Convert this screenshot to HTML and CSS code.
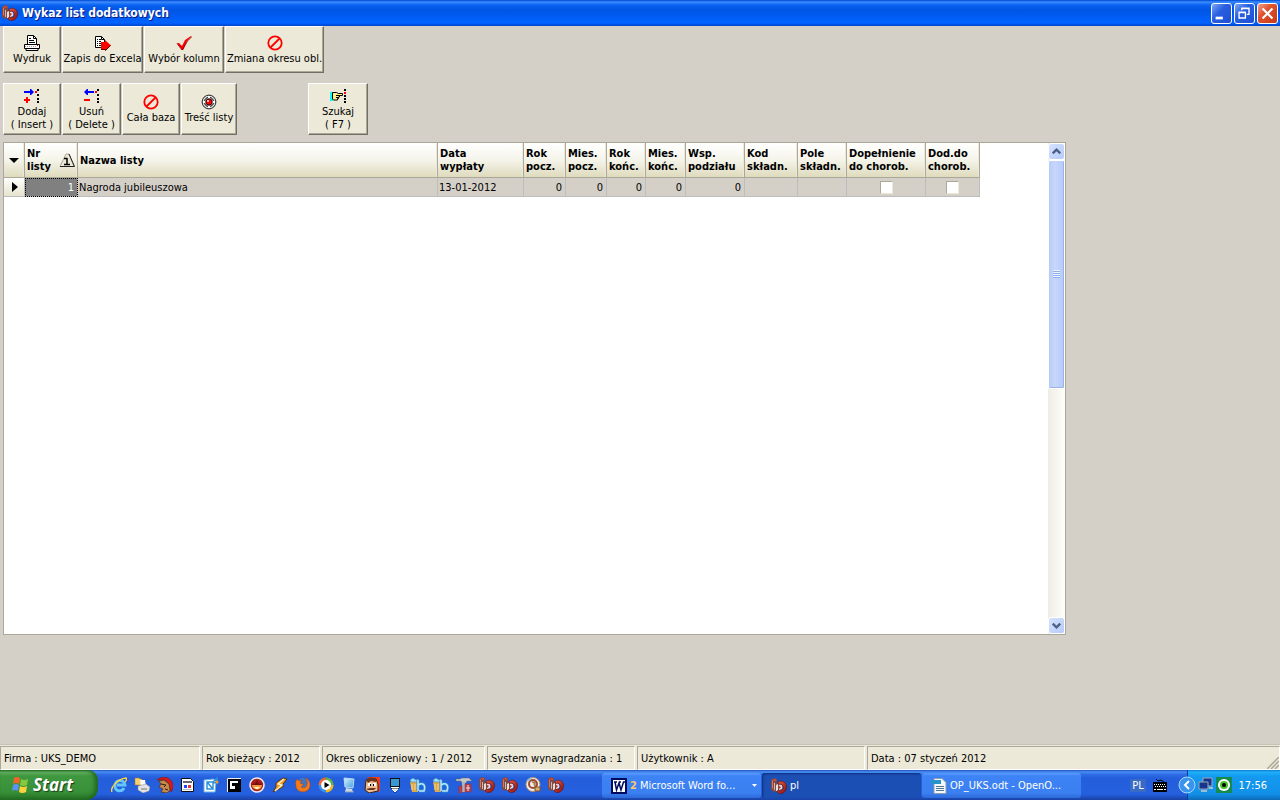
FILE: index.html
```html
<!DOCTYPE html>
<html lang="pl">
<head>
<meta charset="utf-8">
<title>Wykaz list dodatkowych</title>
<link rel="stylesheet" href="styles.css">
</head>
<body>
<svg class="defs" aria-hidden="true">
  <defs>
    <linearGradient id="g-red" x1="0" y1="0" x2="1" y2="1"><stop offset="0" stop-color="#e8604a"/><stop offset="1" stop-color="#8c0c06"/></linearGradient>
    <linearGradient id="g-blue" x1="0" y1="0" x2="1" y2="1"><stop offset="0" stop-color="#d8f2ff"/><stop offset="1" stop-color="#3f9be0"/></linearGradient>
  </defs>
  <symbol id="app" viewBox="0 0 16 16">
    <path d="M0 2l3-2 3 1v5l2-2 2 2v8l-3 1-1-2-3 1-3-2z" fill="#7d4c46"/>
    <path d="M1 3l1-1v9l-1-1z" fill="#e8704c"/><path d="M3 5h1v7H3z" fill="#c9bcb8"/><path d="M2 1l3 0v2H3z" fill="#d0473a"/><path d="M5 7l2-1v7H5z" fill="#f0dad5"/>
    <path d="M7 4c4-2 8 0 8.500 4 0 5-3 8-7 7.500L6 14l1-2 2 1c3-1 4-3 3-5-1-2-3-2-5-2z" fill="url(#g-red)" stroke="#6e0d08" stroke-width=".6"/>
    <path d="M8 7c3-1 4 1 3 4l-3 1z" fill="#e9d5d2"/><path d="M8 8l2 1-2 2z" fill="#b42a1e"/>
  </symbol>
  <symbol id="printer" viewBox="0 0 16 16">
    <path d="M3.500 9.500v-9h6l3 3v6" fill="#fff" stroke="#000"/>
    <path d="M9.500.5v3h3M5 3.500h2M5 5.500h5M5 7.500h6" fill="none" stroke="#000"/>
    <path d="M.5 9.500h15v4H14v2H2v-2H.5z" fill="#fff" stroke="#000"/>
    <path d="M1 13.500h14" stroke="#000"/><path d="M13 10h1v1h-1z" fill="red"/><path d="M1 11.500h12" stroke="#999" stroke-dasharray="1 1"/>
  </symbol>
  <symbol id="export" viewBox="0 0 16 16">
    <path d="M.5 12.500V1.500h6l3 3v8z" fill="#fff" stroke="#000"/><path d="M6.500 1.500v3h3" fill="none" stroke="#000"/>
    <path d="M2 4.500h1m1 0h2m-4 2h1m1 0h2m-4 2h1m1 0h2m-4 2h1m1 0h2" stroke="#000"/>
    <path d="M6 7h4V5l6 5.500-6 5V14H6z" fill="red"/><path d="M6 14.500h4.500V15.500l5-5" fill="none" stroke="#600"/>
  </symbol>
  <symbol id="check" viewBox="0 0 16 16">
    <path d="M1 8h2l3 3 3-6 6-4h1l-5 5-4 9H6z" fill="red"/><path d="M6.500 15l5-9 4-4M1 8.500l5 6.500" fill="none" stroke="#700" stroke-width=".8"/>
  </symbol>
  <symbol id="ban" viewBox="0 0 16 16">
    <circle cx="8" cy="8" r="6.700" fill="none" stroke="red" stroke-width="1.800"/><path d="M3.500 12.500l9-9" stroke="red" stroke-width="1.800"/>
  </symbol>
  <symbol id="insert" viewBox="0 0 16 16">
    <path d="M0 3h6V1h1l3 3-3 3H6V5H0z" fill="#00f"/><path d="M2 9h2v2h2v2H4v2H2v-2H0v-2h2z" fill="red"/>
    <path d="M13 1h2v2h-2zm0 5h2v2h-2zm0 4h2v2h-2zm0 3h2v2h-2z" fill="#000"/><path d="M11 3h2v2h-2z" fill="red"/>
  </symbol>
  <symbol id="delete" viewBox="0 0 16 16">
    <path d="M10 3H4V1H3L0 4l3 3h1V5h6z" fill="#00f"/><path d="M0 11h6v2H0z" fill="red"/>
    <path d="M13 1h2v2h-2zm0 5h2v2h-2zm0 4h2v2h-2zm0 3h2v2h-2z" fill="#000"/><path d="M11 3h2v2h-2z" fill="red"/>
  </symbol>
  <symbol id="target" viewBox="0 0 16 16">
    <circle cx="8" cy="8" r="6.900" fill="#ddd" stroke="#222"/><circle cx="8" cy="8" r="4.700" fill="#999" stroke="#222"/>
    <circle cx="8" cy="8" r="3" fill="red" stroke="#500"/><path d="M7 2h2v2H7zm0 10h2v2H7zM2 7h2v2H2zm10 0h2v2h-2z" fill="#fff"/><path d="M6 6h2v2H6z" fill="#fbb"/>
  </symbol>
  <symbol id="find" viewBox="0 0 16 16">
    <path d="M0 4h3v9H0z" fill="#0ff"/><path d="M2.500 4.500h4l2 1h4v2H9.500v1.500h-1v1.500h-1V12H3.500l-1-1z" fill="#ffef82" stroke="#000"/>
    <path d="M6 7.500h4M6 9.500h3" stroke="#000"/><path d="M14 1h2v2h-2zm0 6h2v2h-2zm0 3h2v2h-2zm0 3h2v2h-2z"/><path d="M14 4h2v2h-2z" fill="red"/>
  </symbol>
  <symbol id="ie" viewBox="0 0 16 16">
    <path d="M13 11c-2 4-9 4-9-2 0-7 9-7 10-1H6" fill="none" stroke="#62c6ff" stroke-width="2.800"/><path d="M1 15C-1 11 6 2 15 1c1 1 0 3-1 4" fill="none" stroke="#ffd33a" stroke-width="1.300"/>
  </symbol>
  <symbol id="desk" viewBox="0 0 16 16">
    <path d="M1 1h4l1 1h2v6H1z" fill="#f5d06c" stroke="#a87b20" stroke-width=".5"/><path d="M6 3l5 0 1 6-5 1z" fill="#fff"/><path d="M4 9l8-2 4 3-1 4-6 2-5-3z" fill="#e4e4e4" stroke="#888" stroke-width=".5"/><path d="M7 12l6 0" stroke="#777"/>
  </symbol>
  <symbol id="helmet" viewBox="0 0 16 16">
    <path d="M0 3c4-4 12-4 15 2 2 4 1 8-1 10l-2-8-4-4z" fill="#d81a1a" stroke="#7d0b09" stroke-width=".5"/><path d="M2 4l5-1 5 4 1 6-3 3-6-1 2-3-4-2 2-3z" fill="#c58a4c" stroke="#562b0d" stroke-width=".7"/><path d="M4 7l5 1-2 2M8 12l3 1" fill="none" stroke="#3b1b07"/>
  </symbol>
  <symbol id="calendar" viewBox="0 0 16 16">
    <path d="M1.500 1.500h9l3 3v10h-12z" fill="#fff" stroke="#111"/><path d="M3 4h9v2H3z" fill="#667"/><path d="M4 8h3v3H4z" fill="#24f"/><path d="M8 8h3v3H8z" fill="#e33"/><path d="M3 12.500h9" stroke="#bbb"/>
  </symbol>
  <symbol id="outlook" viewBox="0 0 16 16">
    <path d="M1 3l10-1 2 3-1 10H1z" fill="#fff" stroke="#65b4e5"/><path d="M4 5h6v7H4zM5 6l4 5M10 5l4-4v5z" fill="none" stroke="#2c91dc" stroke-width="1.500"/><circle cx="14" cy="5" r="1.500" fill="#f39a22"/>
  </symbol>
  <symbol id="square" viewBox="0 0 16 16">
    <path d="M1 1h14v14H1z" fill="#000"/><path d="M1.500 15V1.500H15" fill="none" stroke="#eee"/><path d="M4 4h8v8H4z" fill="#fff"/><path d="M6 6h6v6H9V9H6z" fill="#000"/>
  </symbol>
  <symbol id="flame" viewBox="0 0 16 16">
    <circle cx="8" cy="8" r="7" fill="#a81e1e" stroke="#f1e9e9" stroke-width="1.600"/><path d="M3 8l2-2 1 1 2-4 2 4 2-1 1 2z" fill="#7c0d0d"/><path d="M3 8h10c0 6-10 6-10 0z" fill="#f49a3c"/><path d="M5 10h6l-2 2H7z" fill="#fff0c8"/>
  </symbol>
  <symbol id="bolt" viewBox="0 0 16 16">
    <path d="M11 1L4 6v4l-3 5 10-5V7l4-5z" fill="#f49a1d" stroke="#52351d"/><path d="M12 2L6 7l4 1-7 6" fill="none" stroke="#fff0c8" stroke-width="1.300"/>
  </symbol>
  <symbol id="firefox" viewBox="0 0 16 16">
    <circle cx="8" cy="7.500" r="6.500" fill="#4276c4"/><path d="M2 2l2 2 3-1-2 3c1 1 3 1 4 1l-3 3c3 2 6 0 6-3 1-3-1-5-2-6 5 1 7 8 3 12-5 4-12 1-12-4-1-3 0-5 1-7z" fill="#f37b19" stroke="#aa3f11" stroke-width=".5"/>
  </symbol>
  <symbol id="media" viewBox="0 0 16 16">
    <circle cx="8" cy="8" r="7.500" fill="#3b8de5"/><path d="M8 .5a7.500 7.500 0 0 1 7.500 7.500H8z" fill="#61b341"/><path d="M15.500 8a7.500 7.500 0 0 1-7.500 7.500V8z" fill="#f3b51f"/><path d="M.5 8A7.500 7.500 0 0 1 8 .5V8z" fill="#ef6630"/><circle cx="8" cy="8" r="5" fill="#fff"/><path d="M6.500 5l5 3-5 3z"/>
  </symbol>
  <symbol id="computer" viewBox="0 0 16 16">
    <path d="M3 1l10 1-1 9-8-1z" fill="url(#g-blue)" stroke="#b4dcf8"/><path d="M5 11l6 1 1 3H4z" fill="#ccd9e3"/><path d="M4 15h9" stroke="#7c9dbd"/>
  </symbol>
  <symbol id="face" viewBox="0 0 16 16">
    <path d="M3 0h13v15l-3-2-2-7z" fill="#f03d20"/><path d="M2 3l4-2 6 1 2 5 0 7-9 2-4-3z" fill="#efbd91" stroke="#3b1d12"/><path d="M2 3l5-2 5 1v3l-5-1-3 2zM2 12l4-1 6 0-2 2H4z" fill="#6c351c"/><path d="M4 6h3v3H4zm5 0h3v3H9z" fill="#fff"/><path d="M6 7h1v2H6zm3 0h1v2H9z"/>
  </symbol>
  <symbol id="pen" viewBox="0 0 16 16">
    <path d="M3 1h10v9l-5 6-5-6z" fill="#111"/><path d="M4 2h8v7H4z" fill="#3998d1"/><path d="M4 10.500h8M5 12h6l-3 3z" stroke="#fff" fill="#ddd"/>
  </symbol>
  <symbol id="bluebag" viewBox="0 0 16 16">
    <path d="M0 5h8v10H2z" fill="#e2a845"/><path d="M2 7v6M5 7v6" stroke="#f7d591"/><path d="M0 3l3-2 3 2 2-1 1 3H1z" fill="#9edbfb" stroke="#398cbc" stroke-width=".6"/><path d="M8 3v11M8 8c5-3 8 0 6 6H9" fill="none" stroke="#258ed0" stroke-width="3"/><path d="M8 3v11M8 8c5-3 8 0 6 6H9" fill="none" stroke="#bfe5fa" stroke-width="1.500"/>
  </symbol>
  <symbol id="hammer" viewBox="0 0 16 16">
    <path d="M0 2h4l2-1h7l3 3-5 0-1 2H6L5 4H0z" fill="#c7cacb" stroke="#666" stroke-width=".5"/><path d="M6 5h3v10H6z" fill="#aeb5ba"/><path d="M3 9h3v7H3zM9 7h6v8H9z" fill="#b64250" stroke="#8c2b38" stroke-width=".5"/><path d="M12 8v6M10 11h4" stroke="#f4dddd"/>
  </symbol>
  <symbol id="disc" viewBox="0 0 16 16">
    <circle cx="8" cy="7.500" r="7" fill="#eee" stroke="#bb8c63"/><circle cx="8" cy="7" r="4" fill="none" stroke="#a34a32" stroke-width="2"/><path d="M7 5h3v6M10 10h5v4h-5z" fill="#d6b36d" stroke="#88522d"/><path d="M2 4l4-3" stroke="#85b8d7" stroke-width="2"/>
  </symbol>
  <symbol id="word" viewBox="0 0 16 16">
    <path d="M0 0h16v16H0z" fill="#000b5e"/><path d="M2 2h12v12H2z" fill="#fff"/><path d="M3 4h3M8 4h2m2 0h2M4 4l1.500 8L8 5l2 7 2.500-8" fill="none" stroke="#000b5e" stroke-width="1.500"/>
  </symbol>
  <symbol id="doc" viewBox="0 0 16 16">
    <path d="M3 .5h8l4 4v11H3z" fill="#f4f8fa" stroke="#8b9dac"/><path d="M0 2h10v4H0z" fill="#2793c8"/><path d="M5 8.500h8M5 10.500h8M5 12.500h8" stroke="#51778d"/>
  </symbol>
  <symbol id="flag" viewBox="0 0 20 20">
    <path d="M4 3q3-2 6 0L9 9q-3-2-6 0z" fill="#f36526"/><path d="M11 4q3 2 7 0l-1 6q-4 2-7 0z" fill="#83ca3c"/><path d="M3 10q3-2 6 0l-1 6q-3-2-6 0z" fill="#5b93f4"/><path d="M10 11q3 2 7 0l-1 6q-4 2-7 0z" fill="#ffd23b"/>
  </symbol>
</svg>

<div class="desktop">
  <header class="titlebar">
    <svg class="icon"><use href="#app"/></svg>
    <h1 class="title">Wykaz list dodatkowych</h1>
    <div class="window-buttons">
      <button class="winbtn" aria-label="Minimalizuj"><svg viewBox="0 0 21 21"><path d="M4 14h8v3H4z" fill="#fff"/></svg></button>
      <button class="winbtn" aria-label="Przywróć"><svg viewBox="0 0 21 21"><path d="M7.500 7V4.500h8v7H13M7 5h9M4.500 9.500h7v6h-7zM4 9h8" fill="none" stroke="#fff" stroke-width="1.500"/></svg></button>
      <button class="winbtn close" aria-label="Zamknij"><svg viewBox="0 0 21 21"><path d="M5 5l11 11M16 5L5 16" stroke="#fff" stroke-width="2.400"/></svg></button>
    </div>
  </header>

  <main class="workspace">
    <div class="toolbar">
      <button class="tool w-print"><svg class="icon"><use href="#printer"/></svg><span>Wydruk</span></button>
      <button class="tool w-excel"><svg class="icon"><use href="#export"/></svg><span>Zapis do Excela</span></button>
      <button class="tool w-columns"><svg class="icon"><use href="#check"/></svg><span>Wybór kolumn</span></button>
      <button class="tool w-period"><svg class="icon"><use href="#ban"/></svg><span>Zmiana okresu obl.</span></button>
    </div>
    <div class="toolbar second">
      <button class="tool w-print"><svg class="icon"><use href="#insert"/></svg><span>Dodaj<br>( Insert )</span></button>
      <button class="tool w-delete"><svg class="icon"><use href="#delete"/></svg><span>Usuń<br>( Delete )</span></button>
      <button class="tool w-print"><svg class="icon"><use href="#ban"/></svg><span>Cała baza</span></button>
      <button class="tool w-content"><svg class="icon"><use href="#target"/></svg><span>Treść listy</span></button>
      <button class="tool w-search"><svg class="icon"><use href="#find"/></svg><span>Szukaj<br>( F7 )</span></button>
    </div>

    <section class="grid-panel">
      <div class="grid-area">
        <table class="grid">
          <colgroup><col class="c-mark"><col class="c-no"><col class="c-name"><col class="c-date"><col class="c-y1"><col class="c-m1"><col class="c-y2"><col class="c-m2"><col class="c-share"><col class="c-code"><col class="c-field"><col class="c-fill"><col class="c-add"></colgroup>
          <thead>
            <tr>
              <th class="mark"><svg class="tri" viewBox="0 0 10 10"><path d="M0 3h10L5 8z"/></svg></th>
              <th><div class="sorted"><span>Nr<br>listy</span><svg class="sort" viewBox="0 0 16 16"><path d="M1 14.500L7 2h3l5 12.500z" fill="#ece9d8" stroke="#aca899"/><path d="M1 14.500h14.500L10 2" fill="none" stroke="#222"/><path d="M5 6.500h3.500M5 12.500h6M8 6v7" fill="none" stroke="#000" stroke-width="1.500"/></svg></div></th>
              <th>Nazwa listy</th><th>Data<br>wypłaty</th><th>Rok<br>pocz.</th><th>Mies.<br>pocz.</th><th>Rok<br>końc.</th><th>Mies.<br>końc.</th><th>Wsp.<br>podziału</th><th>Kod<br>składn.</th><th>Pole<br>składn.</th><th>Dopełnienie<br>do chorob.</th><th>Dod.do<br>chorob.</th>
            </tr>
          </thead>
          <tbody>
            <tr>
              <td class="mark"><svg class="tri" viewBox="0 0 10 10"><path d="M3 0v10l6-5z"/></svg></td>
              <td class="num selected">1</td><td>Nagroda jubileuszowa</td><td>13-01-2012</td><td class="num">0</td><td class="num">0</td><td class="num">0</td><td class="num">0</td><td class="num">0</td><td></td><td></td>
              <td class="tick"><input type="checkbox" aria-label="Dopełnienie do chorob."></td>
              <td class="tick"><input type="checkbox" aria-label="Dod.do chorob."></td>
            </tr>
          </tbody>
        </table>
      </div>
      <div class="scrollbar">
        <button class="scroll-btn" aria-label="W górę"><svg viewBox="0 0 16 16"><path d="M4 10l4-4 4 4" fill="none" stroke="#4d6185" stroke-width="2.500"/></svg></button>
        <div class="track"><div class="thumb"><span class="grip"></span></div></div>
        <button class="scroll-btn" aria-label="W dół"><svg viewBox="0 0 16 16"><path d="M4 6l4 4 4-4" fill="none" stroke="#4d6185" stroke-width="2.500"/></svg></button>
      </div>
    </section>
  </main>

  <footer class="statusbar">
    <div class="cell s-company">Firma : UKS_DEMO</div>
    <div class="cell s-year">Rok bieżący : 2012</div>
    <div class="cell s-period">Okres obliczeniowy : 1 / 2012</div>
    <div class="cell s-system">System wynagradzania : 1</div>
    <div class="cell s-user">Użytkownik : A</div>
    <div class="cell s-date">Data : 07 styczeń 2012<svg class="resize" viewBox="0 0 12 12"><path d="M0 12L12 0M4 12l8-8M8 12l4-4" stroke="#aca899" stroke-width="1.500"/></svg></div>
  </footer>

  <nav class="taskbar">
    <button class="start"><svg><use href="#flag"/></svg><span>Start</span></button>
    <div class="quick">
      <svg class="icon"><use href="#ie"/></svg><svg class="icon"><use href="#desk"/></svg><svg class="icon"><use href="#helmet"/></svg><svg class="icon"><use href="#calendar"/></svg><svg class="icon"><use href="#outlook"/></svg><svg class="icon"><use href="#square"/></svg><svg class="icon"><use href="#flame"/></svg><svg class="icon"><use href="#bolt"/></svg><svg class="icon"><use href="#firefox"/></svg><svg class="icon"><use href="#media"/></svg><svg class="icon"><use href="#computer"/></svg><svg class="icon"><use href="#face"/></svg><svg class="icon"><use href="#pen"/></svg><svg class="icon"><use href="#bluebag"/></svg><svg class="icon"><use href="#bluebag"/></svg><svg class="icon"><use href="#hammer"/></svg><svg class="icon"><use href="#app"/></svg><svg class="icon"><use href="#app"/></svg><svg class="icon"><use href="#disc"/></svg><svg class="icon"><use href="#app"/></svg>
    </div>
    <div class="tasks">
      <button class="task"><svg class="icon"><use href="#word"/></svg><b class="count">2</b><span>Microsoft Word fo...</span><svg class="drop" viewBox="0 0 5 3"><path d="M0 0h5L2.500 3z" fill="#fff"/></svg></button>
      <button class="task active"><svg class="icon"><use href="#app"/></svg><span>pl</span></button>
      <button class="task"><svg class="icon"><use href="#doc"/></svg><span>OP_UKS.odt - OpenO...</span></button>
    </div>
    <div class="language">
      <span class="lang">PL</span>
      <svg class="icon" viewBox="0 0 16 16"><path d="M1 5h14v10H1z" fill="#000"/><path d="M2 7.500h12M3 9.500h11" stroke="#fff" stroke-dasharray="1 1"/><path d="M2 12.500h2m1 0h6m1 0h2" stroke="#fff"/><path d="M4 2l2 2 3-1 3 2" fill="none" stroke="#000"/></svg>
    </div>
    <div class="tray">
      <button class="expand" aria-label="Pokaż ukryte ikony"><svg viewBox="0 0 18 18"><circle cx="9" cy="9" r="8" fill="#3994ee" stroke="#a7d8ff"/><path d="M11 5L7 9l4 4" fill="none" stroke="#fff" stroke-width="2"/></svg></button>
      <svg class="icon" viewBox="0 0 16 16"><path d="M5 1h9v8H5z" fill="#17358a" stroke="#9aa9bd"/><path d="M1 5h9v7H1z" fill="#17358a" stroke="#9aa9bd"/><path d="M3 14h6m2-3h4" stroke="#ccc" stroke-width="1.500"/></svg>
      <svg class="icon" viewBox="0 0 16 16"><path d="M0 0h16v16H0z" fill="#168b50"/><circle cx="8" cy="8" r="6" fill="#fff"/><circle cx="8" cy="8" r="4" fill="#48c22c"/><circle cx="8" cy="8" r="2"/></svg>
      <time class="clock">17:56</time>
    </div>
  </nav>
</div>
</body>
</html>
```
FILE: styles.css
```css
* { box-sizing: border-box; }

body {
  margin: 0;
  font: 11px/13px "DejaVu Sans Condensed", "DejaVu Sans", Tahoma, sans-serif;
  color: #000;
  background: #d4d0c8;
}

button { font: inherit; color: inherit; padding: 0; margin: 0; white-space: nowrap; }
svg { display: block; }
.defs { position: absolute; width: 0; height: 0; }
.icon { width: 16px; height: 16px; flex: none; }
.desktop { min-height: 100vh; display: flex; flex-direction: column; }

.titlebar {
  height: 26px;
  display: flex;
  align-items: center;
  gap: 4px;
  padding: 0 2px;
  background: linear-gradient(#0048d0 0, #3a8cff 2px, #0a62f0 5px, #0055e5 10px, #0060fa 20px, #0062ff 23px, #0042c8 100%);
}
.title {
  margin: 0;
  flex: 1;
  font-size: 12px;
  line-height: 16px;
  color: #fff;
  text-shadow: 1px 1px #0a1883;
}
.window-buttons { display: flex; gap: 2px; }
.winbtn {
  width: 21px;
  height: 21px;
  border: 1px solid #fff;
  border-radius: 3px;
  background: linear-gradient(135deg, #7ea6f8, #2a5fe0 40%, #1c50d4);
}
.winbtn.close { background: linear-gradient(135deg, #f0a088, #e0502c 40%, #c63a14); }

.workspace { flex: 1; display: flex; flex-direction: column; padding: 0 214px 109px 3px; }
.toolbar { display: flex; gap: 1px; height: 47px; }
.toolbar.second { height: 52px; margin: 10px 0 7px; }
.tool {
  display: flex;
  flex-direction: column;
  align-items: center;
  justify-content: center;
  gap: 1px;
  background: #ece9d8;
  border: 1px solid;
  border-color: #fff #716f64 #716f64 #fff;
  box-shadow: inset -1px -1px #aca899;
}
.w-print { width: 58px; }
.w-excel { width: 81px; }
.w-columns { width: 80px; }
.w-period { width: 99px; }
.w-delete { width: 59px; }
.w-content { width: 56px; }
.w-search { width: 60px; margin-left: 70px; }

.grid-panel {
  flex: 1;
  display: flex;
  background: #fff;
  border: 1px solid #aca899;
}
.grid-area { flex: 1; min-width: 0; }
.grid { width: 976px; table-layout: fixed; border-collapse: separate; border-spacing: 0; }
.c-mark { width: 21px; }
.c-no, .c-code { width: 53px; }
.c-name { width: 360px; }
.c-date { width: 86px; }
.c-y1 { width: 42px; }
.c-m1 { width: 41px; }
.c-y2 { width: 39px; }
.c-m2 { width: 40px; }
.c-share { width: 59px; }
.c-field { width: 49px; }
.c-fill { width: 79px; }
.c-add { width: 54px; }
.grid th {
  height: 35px;
  padding: 0 0 0 2px;
  text-align: left;
  white-space: nowrap;
  background: linear-gradient(#fff, #f5f4ea 50%, #dedbbd);
  border-right: 1px solid #aca899;
  border-bottom: 1px solid #aca899;
  box-shadow: inset -1px 0 #ece9d8;
}
.grid td {
  height: 19px;
  padding: 0 2px 0 1px;
  white-space: nowrap;
  background: #d4d0c8;
  border-right: 1px solid #bdbdbd;
  border-bottom: 1px solid #bdbdbd;
}
.grid td.num { text-align: right; padding-right: 3px; }
.grid td.selected { color: #fff; background: #808080; outline: 1px dotted #000; outline-offset: -1px; }
.grid .mark { padding: 0; }
.grid td.mark { background: linear-gradient(#fff, #e6e3cd); }
.tri { width: 10px; height: 10px; margin: 0 auto; }
.sorted { display: flex; align-items: center; justify-content: space-between; padding-right: 2px; }
.sort { width: 16px; height: 16px; }
.grid td.tick { padding: 0; text-align: center; }
.tick input {
  appearance: none;
  display: block;
  width: 13px;
  height: 13px;
  margin: 0 auto;
  background: #fff;
  border: 1px solid;
  border-color: #aca899 #ece9d8 #ece9d8 #aca899;
}

.scrollbar { width: 17px; display: flex; flex-direction: column; background: linear-gradient(90deg, #eeede5, #fefefb); }
.scroll-btn {
  width: 17px;
  height: 17px;
  border: 1px solid #fff;
  border-radius: 3px;
  background: linear-gradient(135deg, #d6e2fe, #b5cbfa);
}
.track { flex: 1; }
.thumb {
  height: 50%;
  display: flex;
  align-items: center;
  justify-content: center;
  border: 1px solid #fff;
  border-radius: 2px;
  box-shadow: inset -1px -1px #98b4ea;
  background: linear-gradient(90deg, #b8cbf8, #c8d6fb 40%, #b4cbfc);
}
.grip { width: 7px; height: 8px; background: repeating-linear-gradient(#eef4fe 0 1px, #8cb0f8 1px 2px); }

.statusbar {
  height: 26px;
  display: flex;
  gap: 2px;
  padding-top: 1px;
  background: #ece9d8;
  border-top: 1px solid #c5c2b8;
}
.cell {
  flex: none;
  padding: 5px 3px 4px;
  border: 1px solid;
  border-color: #aca899 #fff #fff #aca899;
  white-space: nowrap;
}
.s-company { width: 200px; }
.s-year { width: 118px; }
.s-period { width: 163px; }
.s-system { width: 148px; }
.s-user { width: 228px; }
.s-date { flex: 1; display: flex; justify-content: space-between; padding-right: 0; padding-bottom: 0; }
.resize { width: 12px; height: 12px; align-self: flex-end; }

.taskbar {
  height: 30px;
  display: flex;
  align-items: stretch;
  color: #fff;
  background: linear-gradient(#1f4fb8 0, #4a90f4 2px, #3070e8 4px, #245edb 8px, #2560de 24px, #1941a5 100%);
}
.start {
  width: 98px;
  display: flex;
  align-items: center;
  gap: 3px;
  padding-left: 10px;
  border: 0;
  border-radius: 0 10px 12px 0;
  background: linear-gradient(#2a6e2a 0, #66b466 2px, #3f973f 6px, #389038 22px, #246f24 100%);
  box-shadow: inset -3px 0 4px #1f651f;
  font: italic bold 17px/20px "Open Sans", sans-serif;
  text-shadow: 1px 1px 1px #173f17;
}
.start svg { width: 20px; height: 20px; }
.quick { display: flex; align-items: center; gap: 7px; padding-left: 13px; }
.tasks { display: flex; flex: 1; gap: 1px; margin-left: 38px; padding: 3px 0 2px; }
.task {
  width: 159px;
  display: flex;
  align-items: center;
  gap: 3px;
  padding: 0 4px 0 9px;
  border: 0;
  border-radius: 3px;
  background: linear-gradient(#5c9cff 0, #3d83f5 3px, #3b80f1 20px, #2c68d8 100%);
}
.task.active { background: #1c4fb4; box-shadow: inset 1px 1px 2px #0d2f7e; }
.count { color: #ffc66e; }
.drop { width: 5px; height: 3px; margin-left: auto; }
.language { display: flex; align-items: center; gap: 6px; margin-right: 19px; }
.lang { width: 16px; background: #3a6bc4; text-align: center; }
.tray {
  width: 93px;
  display: flex;
  align-items: center;
  gap: 2px;
  padding-right: 13px;
  border-left: 1px solid #0a3c9c;
  background: linear-gradient(#1278c8 0, #1fb0f8 2px, #149af0 6px, #1290e8 24px, #0d69b8 100%);
}
.expand { width: 18px; height: 18px; margin-left: -10px; border: 0; background: none; }
.clock { margin-left: auto; }
```
